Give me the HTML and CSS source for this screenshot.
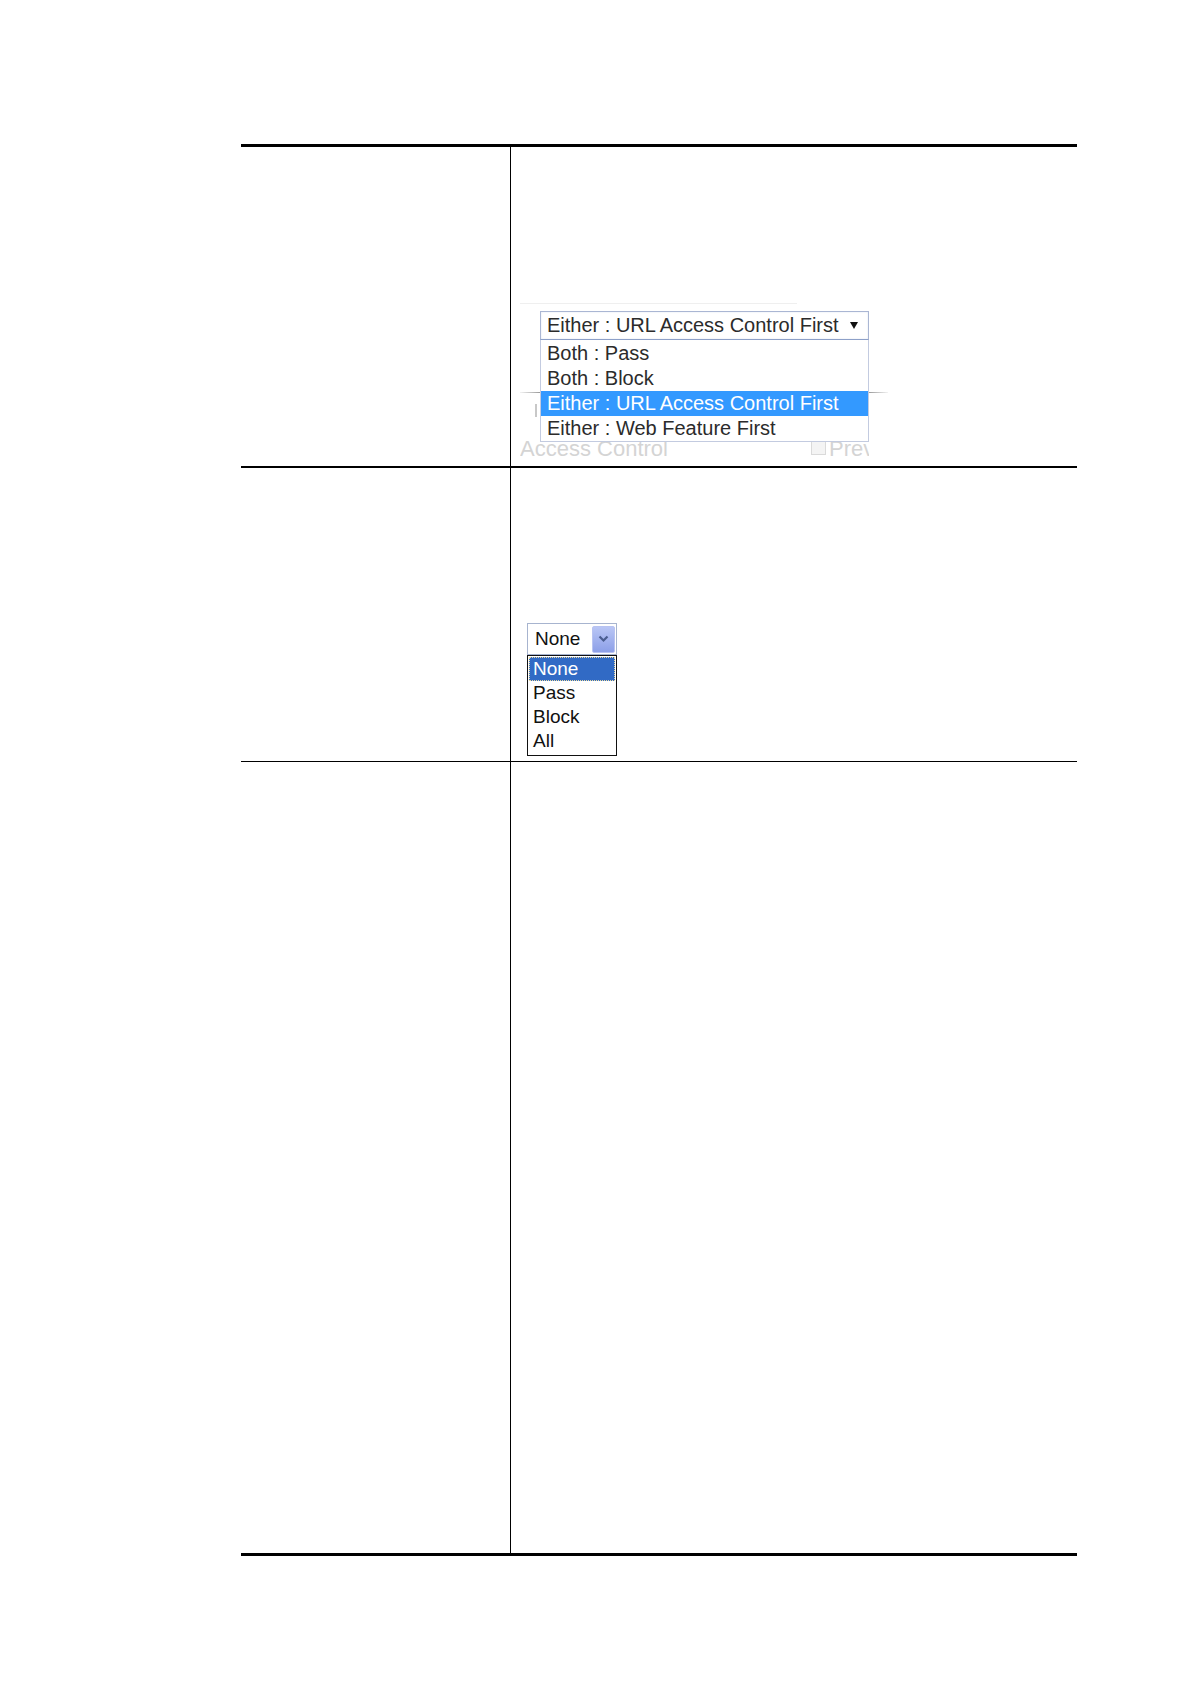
FILE: index.html
```html
<!DOCTYPE html>
<html>
  <head>
    <meta charset="UTF-8">
    <title>Web Content Filter</title>
    <link rel="stylesheet" href="styles.css">
  </head>
  <body>
    <div class="table">
      <div class="row row-first">
        <div class="cell-label"></div>
        <div class="cell-body">
          <div class="shot shot-filter">
            <div class="ghost-line"></div>
            <div class="ghost-rule ghost-rule-left"></div>
            <div class="ghost-rule ghost-rule-right"></div>
            <div class="ghost-bar"></div>
            <div class="combo">
              <span>Either : URL Access Control First</span>
              <svg class="combo-arrow" width="8" height="7" viewBox="0 0 8 7"><polygon points="0,0 8,0 4,7" fill="#111"/></svg>
            </div>
            <ul class="combo-list">
              <li>Both : Pass</li>
              <li>Both : Block</li>
              <li class="selected">Either : URL Access Control First</li>
              <li>Either : Web Feature First</li>
            </ul>
            <div class="ghost-row">
              <span class="ghost-text">Access Control</span>
              <span class="ghost-check"></span>
              <span class="ghost-text">Prevent</span>
            </div>
          </div>
        </div>
      </div>

      <div class="row row-second">
        <div class="cell-label"></div>
        <div class="cell-body">
          <div class="shot shot-log">
            <div class="xp-combo">
              <span>None</span>
              <span class="xp-button">
                <svg width="11" height="8" viewBox="0 0 11 8"><polyline points="1.5,1.5 5.5,5.5 9.5,1.5" fill="none" stroke="#4a5d8f" stroke-width="2.2"/></svg>
              </span>
            </div>
            <ul class="xp-list">
              <li class="selected">None</li>
              <li>Pass</li>
              <li>Block</li>
              <li>All</li>
            </ul>
          </div>
        </div>
      </div>

      <div class="row row-third">
        <div class="cell-label"></div>
        <div class="cell-body"></div>
      </div>
    </div>
  </body>
</html>
```

FILE: styles.css
```css
body {
  margin: 0;
  background-color: #fff;
  font-family: "Liberation Sans", Arial, sans-serif;
}

.table {
  margin: 144px 0 0 241px;
  width: 836px;
  border-top: 3px solid #000;
  border-bottom: 3px solid #000;
}
.row {
  display: grid;
  grid-template-columns: 269px 1fr;
}
.cell-body {
  border-left: 1px solid #000;
}
.row-first {
  height: 319px;
  border-bottom: 2px solid #000;
}
.row-second {
  height: 293px;
  border-bottom: 1px solid #000;
}
.row-third {
  height: 791px;
}

/* screenshot: filter priority dropdown */
.shot {
  position: relative;
}
.shot-filter {
  margin: 153px 0 0 9px;
  width: 370px;
  height: 156px;
  overflow: hidden;
}
.ghost-line {
  margin-top: 3px;
  width: 277px;
  height: 1px;
  background-color: #efefef;
}
.ghost-rule {
  position: absolute;
  top: 92px;
  height: 1px;
}
.ghost-rule-left {
  left: 0;
  width: 20px;
  background: linear-gradient(to right, #f2f2f2, #9a9a9a);
}
.ghost-rule-right {
  left: 349px;
  width: 19px;
  background: linear-gradient(to right, #9a9a9a, #f2f2f2);
}
.ghost-bar {
  position: absolute;
  left: 15px;
  top: 104px;
  width: 2px;
  height: 13px;
  background-color: #c8c8c8;
}
.combo {
  position: relative;
  display: flex;
  align-items: center;
  justify-content: space-between;
  margin: 7px 0 0 20px;
  width: 329px;
  height: 29px;
  padding: 0 10px 0 6px;
  box-sizing: border-box;
  border: 1px solid #aab6d3;
  border-bottom-color: #8da0c8;
  box-shadow: inset 0 0 2px #dde3f0;
  background-color: #fff;
  font-size: 20px;
  color: #2b2b2b;
}
.combo-list {
  position: relative;
  margin: 0 0 0 20px;
  padding: 1px 0 0;
  width: 329px;
  box-sizing: border-box;
  list-style: none;
  border: 1px solid #c3cbe0;
  border-top: none;
  background-color: #fff;
  font-size: 20px;
  color: #2b2b2b;
}
.combo-list li {
  height: 25px;
  line-height: 25px;
  padding-left: 6px;
  white-space: nowrap;
}
.combo-list li.selected {
  background-color: #3399ff;
  color: #fff;
}
.ghost-row {
  display: flex;
  align-items: flex-start;
  width: 349px;
  margin-top: -4px;
  overflow: hidden;
  font-size: 22px;
  color: #d4d4d4;
  white-space: nowrap;
}
.ghost-text {
  line-height: 22px;
}
.ghost-check {
  flex: none;
  width: 13px;
  height: 13px;
  margin: 2px 3px 0 143px;
  border: 1px solid #dadada;
  background-color: #f4f4f4;
}

/* screenshot: log dropdown */
.shot-log {
  margin: 155px 0 0 16px;
  width: 90px;
  font-family: "Liberation Sans", Tahoma, sans-serif;
  font-size: 19px;
  color: #111;
}
.xp-combo {
  display: flex;
  align-items: center;
  justify-content: space-between;
  height: 32px;
  padding: 1px 1px 1px 7px;
  box-sizing: border-box;
  border: 1px solid #a7b4cf;
  background-color: #fff;
}
.xp-button {
  display: flex;
  align-items: center;
  justify-content: center;
  width: 23px;
  height: 27px;
  box-sizing: border-box;
  border: 1px solid #b8c3f2;
  border-radius: 2px;
  background: linear-gradient(to bottom, #b9c6f5, #8c9fe8);
}
.xp-list {
  margin: 0;
  padding: 1px 1px 2px;
  list-style: none;
  border: 1px solid #111;
  background-color: #fff;
}
.xp-list li {
  height: 24px;
  line-height: 24px;
  padding-left: 4px;
  box-sizing: border-box;
}
.xp-list li.selected {
  padding-left: 3px;
  line-height: 22px;
  border: 1px dotted #e8d9a0;
  background-color: #316ac5;
  color: #fff;
}
```
